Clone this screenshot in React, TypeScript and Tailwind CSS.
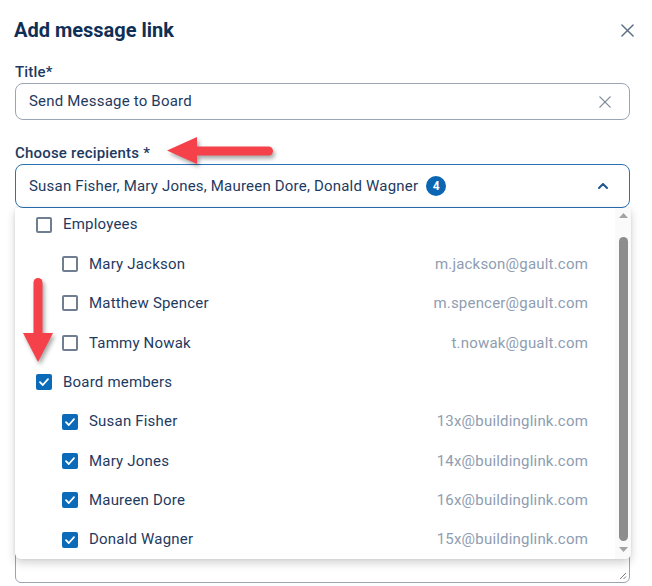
import React from "react";

type Row = {
  name: string;
  email?: string;
  checked: boolean;
  group?: boolean;
};

const rows: Row[] = [
  { name: "Employees", checked: false, group: true },
  { name: "Mary Jackson", email: "m.jackson@gault.com", checked: false },
  { name: "Matthew Spencer", email: "m.spencer@gault.com", checked: false },
  { name: "Tammy Nowak", email: "t.nowak@gualt.com", checked: false },
  { name: "Board members", checked: true, group: true },
  { name: "Susan Fisher", email: "13x@buildinglink.com", checked: true },
  { name: "Mary Jones", email: "14x@buildinglink.com", checked: true },
  { name: "Maureen Dore", email: "16x@buildinglink.com", checked: true },
  { name: "Donald Wagner", email: "15x@buildinglink.com", checked: true },
];

function Checkbox({ checked }: { checked: boolean }) {
  if (checked) {
    return (
      <span className="flex h-[16px] w-[16px] shrink-0 items-center justify-center rounded-[2px] bg-[#0b6bb8]">
        <svg width="12" height="12" viewBox="0 0 12 12" fill="none">
          <polyline
            points="2,6.2 4.8,9 10,3.2"
            stroke="white"
            strokeWidth="1.8"
            strokeLinecap="round"
            strokeLinejoin="round"
          />
        </svg>
      </span>
    );
  }
  return (
    <span className="h-[16px] w-[16px] shrink-0 rounded-[2px] border-2 border-[#6f7f91] bg-white" />
  );
}

function CloseIcon({ size, color, width }: { size: number; color: string; width: number }) {
  return (
    <svg width={size} height={size} viewBox="0 0 14 14" fill="none">
      <path d="M1 1L13 13M13 1L1 13" stroke={color} strokeWidth={width} strokeLinecap="round" />
    </svg>
  );
}

export default function App() {
  return (
    <div className="relative h-[586px] w-[652px] overflow-hidden bg-white font-['Roboto',sans-serif] tracking-[0.2px] text-[#1e3a5f]">
      <div className="pl-[15px] pr-[22px]">
        {/* header */}
        <div className="flex h-[60px] items-center justify-between">
          <h1 className="-ml-px text-[20px] font-bold leading-[24px] tracking-normal text-[#0f2f55]">
            Add message link
          </h1>
          <button className="mr-[-7px] flex h-[20px] w-[20px] items-center justify-center">
            <CloseIcon size={13} color="#5d6f85" width={1.6} />
          </button>
        </div>

        {/* title field */}
        <div className="mt-[3px] text-[15px] font-medium leading-[18px] text-[#1e3a5f]">Title*</div>
        <div className="mt-[2px] flex h-[37px] items-center justify-between rounded-[8px] border border-[#9aa5b3] pl-[13px] pr-[18px]">
          <span className="text-[15px] text-[#1e3a5f]">Send Message to Board</span>
          <CloseIcon size={12} color="#7c8898" width={1.5} />
        </div>

        {/* recipients */}
        <div className="mt-[24px] text-[15px] font-medium leading-[18px] text-[#1e3a5f]">
          Choose recipients *
        </div>
        <div className="mt-[2px] flex h-[44px] items-center justify-between rounded-[8px] border border-[#2b72b5] pl-[13px] pr-[20px]">
          <div className="flex items-center gap-[8px]">
            <span className="text-[15px] text-[#1e3a5f]">
              Susan Fisher, Mary Jones, Maureen Dore, Donald Wagner
            </span>
            <span className="flex h-[20px] w-[20px] items-center justify-center rounded-full bg-[#0a66b2] text-[12px] font-bold tracking-normal text-white">
              4
            </span>
          </div>
          <svg width="12" height="8" viewBox="0 0 12 8" fill="none">
            <polyline
              points="2,6 6,2 10,6"
              stroke="#1d5691"
              strokeWidth="2"
              strokeLinecap="round"
              strokeLinejoin="round"
            />
          </svg>
        </div>

        {/* message box, mostly under the open list */}
        <div className="relative mt-[34px] h-[341px] rounded-[6px] border border-[#9aa5b3]">
          <svg className="absolute bottom-[2px] right-[2px]" width="8" height="8" viewBox="0 0 8 8" fill="none">
            <path d="M7 1L1 7M7 4.5L4.5 7" stroke="#7b7b7b" strokeWidth="1" />
          </svg>
        </div>
      </div>

      {/* open recipient list */}
      <div className="absolute left-[15px] top-[208px] flex h-[351px] w-[616px] overflow-hidden rounded-b-[6px] bg-white shadow-[0_4px_10px_rgba(0,0,0,0.18),0_0_3px_rgba(0,0,0,0.08)]">
        <div className="flex-1 overflow-hidden">
          <div className="-mt-[3px]">
            {rows.map((r) => (
              <div
                key={r.name}
                className={`flex h-[39.375px] items-center justify-between pr-[27px] ${
                  r.group ? "pl-[21px]" : "pl-[47px]"
                }`}
              >
                <div className="flex items-center gap-[11px]">
                  <Checkbox checked={r.checked} />
                  <span className="text-[15px] text-[#1e3a5f]">{r.name}</span>
                </div>
                {r.email && <span className="text-[15px] text-[#8e9db1]">{r.email}</span>}
              </div>
            ))}
          </div>
        </div>

        {/* scrollbar */}
        <div className="flex w-[16px] flex-col items-center bg-[#fafafa]">
          <svg className="mt-[5px]" width="9" height="5" viewBox="0 0 9 5">
            <polygon points="0,5 4.5,0 9,5" fill="#a3a3a3" />
          </svg>
          <div className="mt-[19px] h-[304px] w-[9px] rounded-full bg-[#8d8d8d]" />
          <svg className="mt-[6px]" width="9" height="5" viewBox="0 0 9 5">
            <polygon points="0,0 9,0 4.5,5" fill="#a3a3a3" />
          </svg>
        </div>
      </div>

      {/* callout arrows */}
      <svg
        className="absolute left-[160px] top-[132px] drop-shadow-[2px_3px_2px_rgba(0,0,0,0.35)]"
        width="120"
        height="40"
        viewBox="0 0 120 40"
      >
        <path d="M34 14.5H108.5A4.5 4.5 0 0 1 108.5 23.5H34Z" fill="#f5424a" />
        <polygon points="7,18.5 37,5 37,32" fill="#f5424a" />
      </svg>
      <svg
        className="absolute left-[20px] top-[270px] drop-shadow-[2px_3px_2px_rgba(0,0,0,0.35)]"
        width="40"
        height="100"
        viewBox="0 0 40 100"
      >
        <path d="M13.5 12.5A4.5 4.5 0 0 1 22.5 12.5V66H13.5Z" fill="#f5424a" />
        <polygon points="3,63 33,63 18,92" fill="#f5424a" />
      </svg>
    </div>
  );
}
